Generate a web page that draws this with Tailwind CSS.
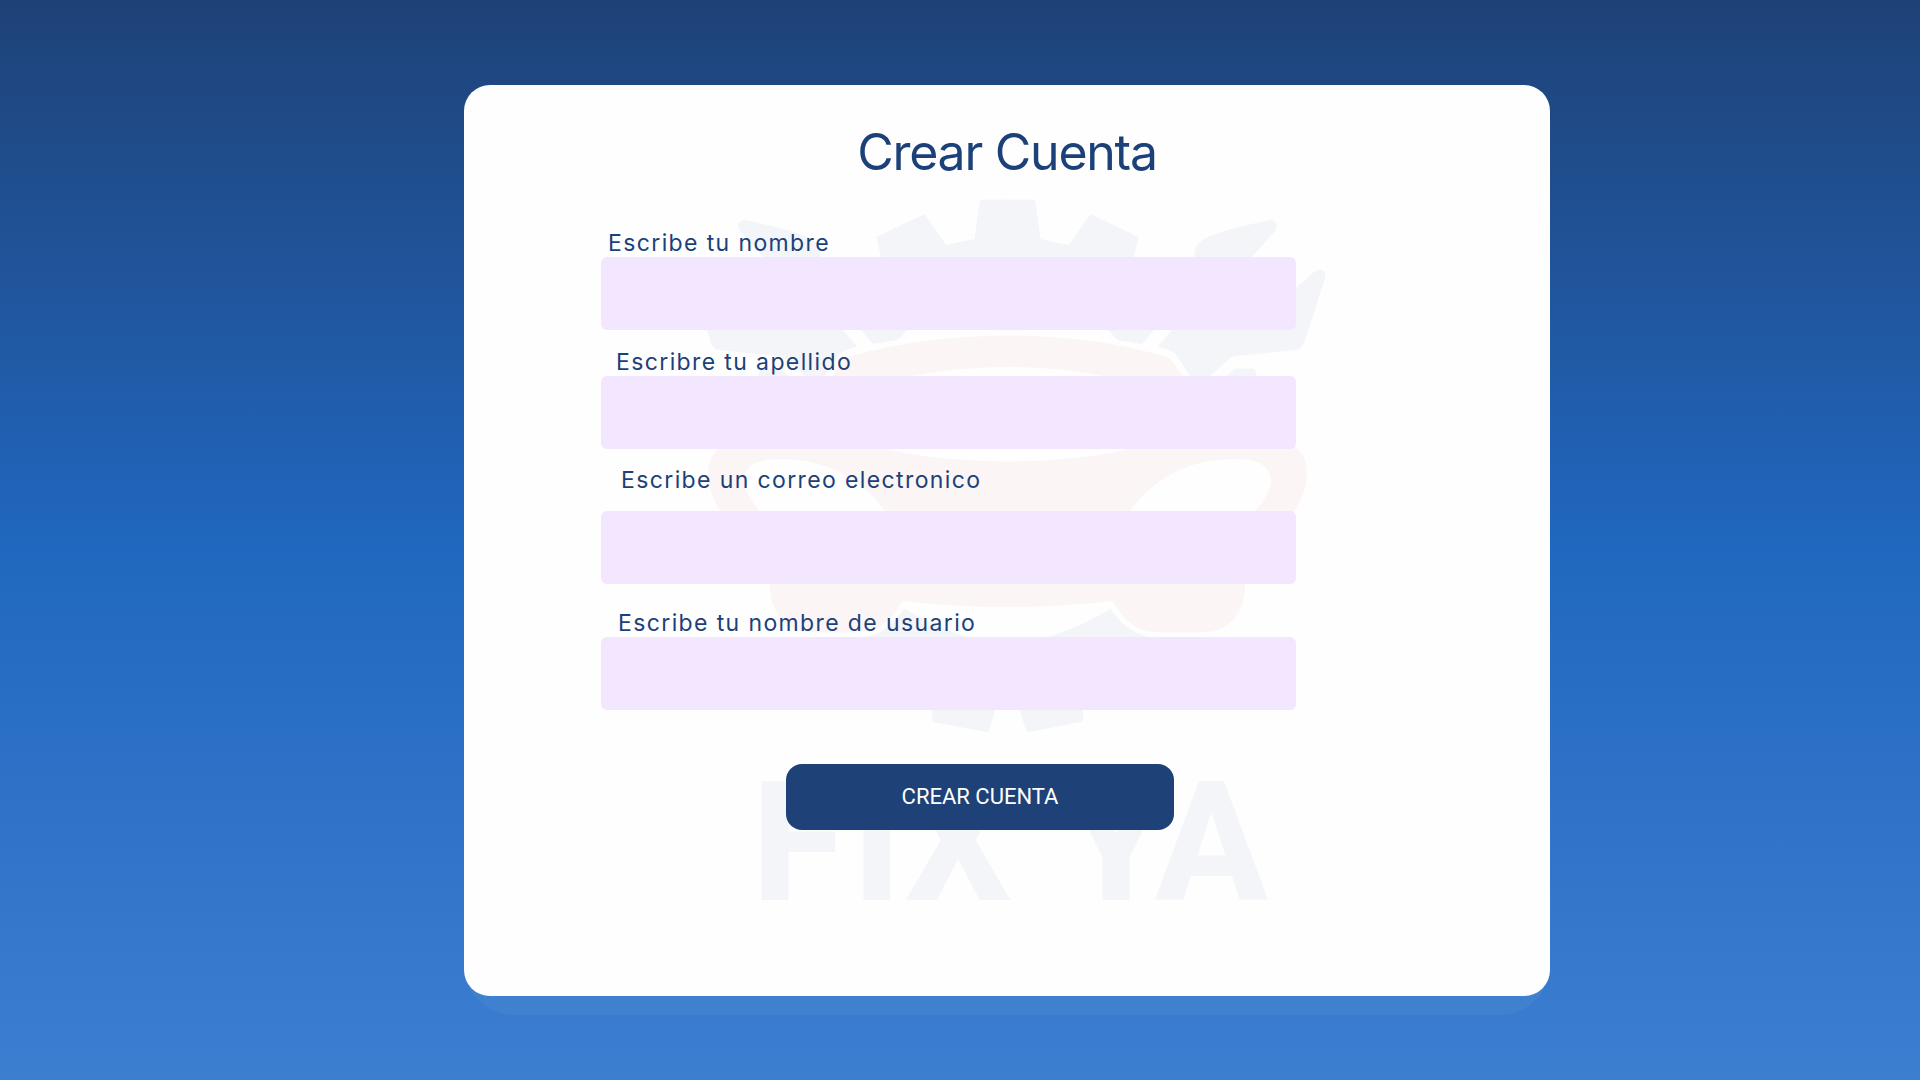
<!DOCTYPE html>
<html lang="es">
<head>
<meta charset="utf-8">
<meta name="viewport" content="width=device-width, initial-scale=1">
<title>Crear Cuenta</title>
<script src="https://cdn.jsdelivr.net/npm/@tailwindcss/browser@4"></script>
</head>
<body class="min-h-screen bg-linear-to-b from-[#1e4277] via-[#2067bf] to-[#3c7fd1] font-['Inter',sans-serif] text-[#1c4179]">
<main class="flex justify-center pt-[85px] pb-16 pl-[94px]">
  <div class="w-[1086px] max-w-full rounded-[50px] bg-white/4 pb-[19px]">
    <section class="relative rounded-[26px] bg-[#fefefe] pt-[37px] pb-[166px]">
      <!-- Brand watermark -->
      <svg class="absolute inset-0 h-full w-full" viewBox="464 85 1086 911" aria-hidden="true">
        <defs>
          <g id="half">
            <g fill="#f3f5f9">
              <path d="M1007 199.500H1035L1040.500 239L1069 245L1090.500 214L1138.500 237L1130 275V300L1154 330L1142 344L1117.500 340L1108 330H1007Z"/>
              <path d="M1194 262C1194 246 1197 243 1208 237C1224 230 1247 225 1270 220C1276 219 1279 226 1275 231L1251 258L1240 285L1265 310L1296 288L1315 271C1320 267 1326 271 1325.500 277L1304 343Q1302 349 1296 350L1236 356Q1232 356 1229 359L1210 376L1200 384L1190 376L1177 356Q1174 352 1169 350L1158 346.500L1172 330Z"/>
              <path d="M1226 377L1232 371Q1234 368.500 1238 368.500H1252Q1254 368.500 1255 370L1257 377L1240 390Z"/>
              <path d="M1110.500 608.500Q1125 631 1147 636.500L1120 660H1007V645Q1064 638 1110.500 608.500Z"/>
              <path d="M1020 711L1026 730Q1026.500 732.500 1029 732L1081 722Q1083 721.500 1083 719V700H1020Z"/>
            </g>
            <g fill="#fbf5f6">
              <path d="M1007 335.500Q1095 336 1167 357Q1171 359 1173 362L1183 377H1108Q1060 367 1007 367Z"/>
              <path fill-rule="evenodd" d="M1007 461.500Q1077 461 1130 449L1180 430L1280 437Q1307 448 1307 474Q1306 495 1294 512L1245 560V585C1245 614 1227 632 1206 632Q1180 633 1156 632C1135 632 1121 617 1113 601Q1060 607 1007 607ZM1130 511C1152 480 1188 459 1233 459C1261 459 1271 467 1271 482Q1270 494 1255 511L1220 535H1140Z"/>
            </g>
          </g>
        </defs>
        <use href="#half"/>
        <use href="#half" transform="translate(2015 0) scale(-1 1)"/>
        <g fill="#f3f5f9" font-family="Roboto, sans-serif" font-weight="800" font-size="167">
          <text y="900"><tspan x="752">F</tspan><tspan x="852">I</tspan><tspan x="905">X</tspan></text>
          <text y="900"><tspan x="1064">Y</tspan><tspan x="1155">A</tspan></text>
        </g>
      </svg>

      <div class="relative">
        <h1 class="text-center text-[50px] leading-[60px] font-normal tracking-tight">Crear Cuenta</h1>
        <form class="mt-[45px] flex flex-col pl-[137px]">
          <label for="nombre" class="w-[695px] pt-[2px] pl-[7px] text-[23px] leading-[28px] tracking-[0.06em]">Escribe tu nombre</label>
          <input id="nombre" type="text" class="h-[73px] w-[695px] rounded-md bg-[#f3e6ff] px-4 text-2xl outline-none">
          <label for="apellido" class="mt-4 w-[695px] pt-[2px] pl-[15px] text-[23px] leading-[28px] tracking-[0.06em]">Escribre tu apellido</label>
          <input id="apellido" type="text" class="h-[73px] w-[695px] rounded-md bg-[#f3e6ff] px-4 text-2xl outline-none">
          <label for="correo" class="mt-[15px] w-[695px] pt-[2px] pl-5 text-[23px] leading-[28px] tracking-[0.06em]">Escribe un correo electronico</label>
          <input id="correo" type="email" class="mt-[17px] h-[73px] w-[695px] rounded-md bg-[#f3e6ff] px-4 text-2xl outline-none">
          <label for="usuario" class="mt-[23px] w-[695px] pt-[2px] pl-[17px] text-[23px] leading-[28px] tracking-[0.06em]">Escribe tu nombre de usuario</label>
          <input id="usuario" type="text" class="h-[73px] w-[695px] rounded-md bg-[#f3e6ff] px-4 text-2xl outline-none">
          <button type="submit" class="mt-[54px] ml-[185px] h-[66px] w-[388px] rounded-2xl bg-[#1e4277] pb-[2px] font-['Roboto',sans-serif] text-[22px] text-white">CREAR CUENTA</button>
        </form>
      </div>
    </section>
  </div>
</main>
</body>
</html>
